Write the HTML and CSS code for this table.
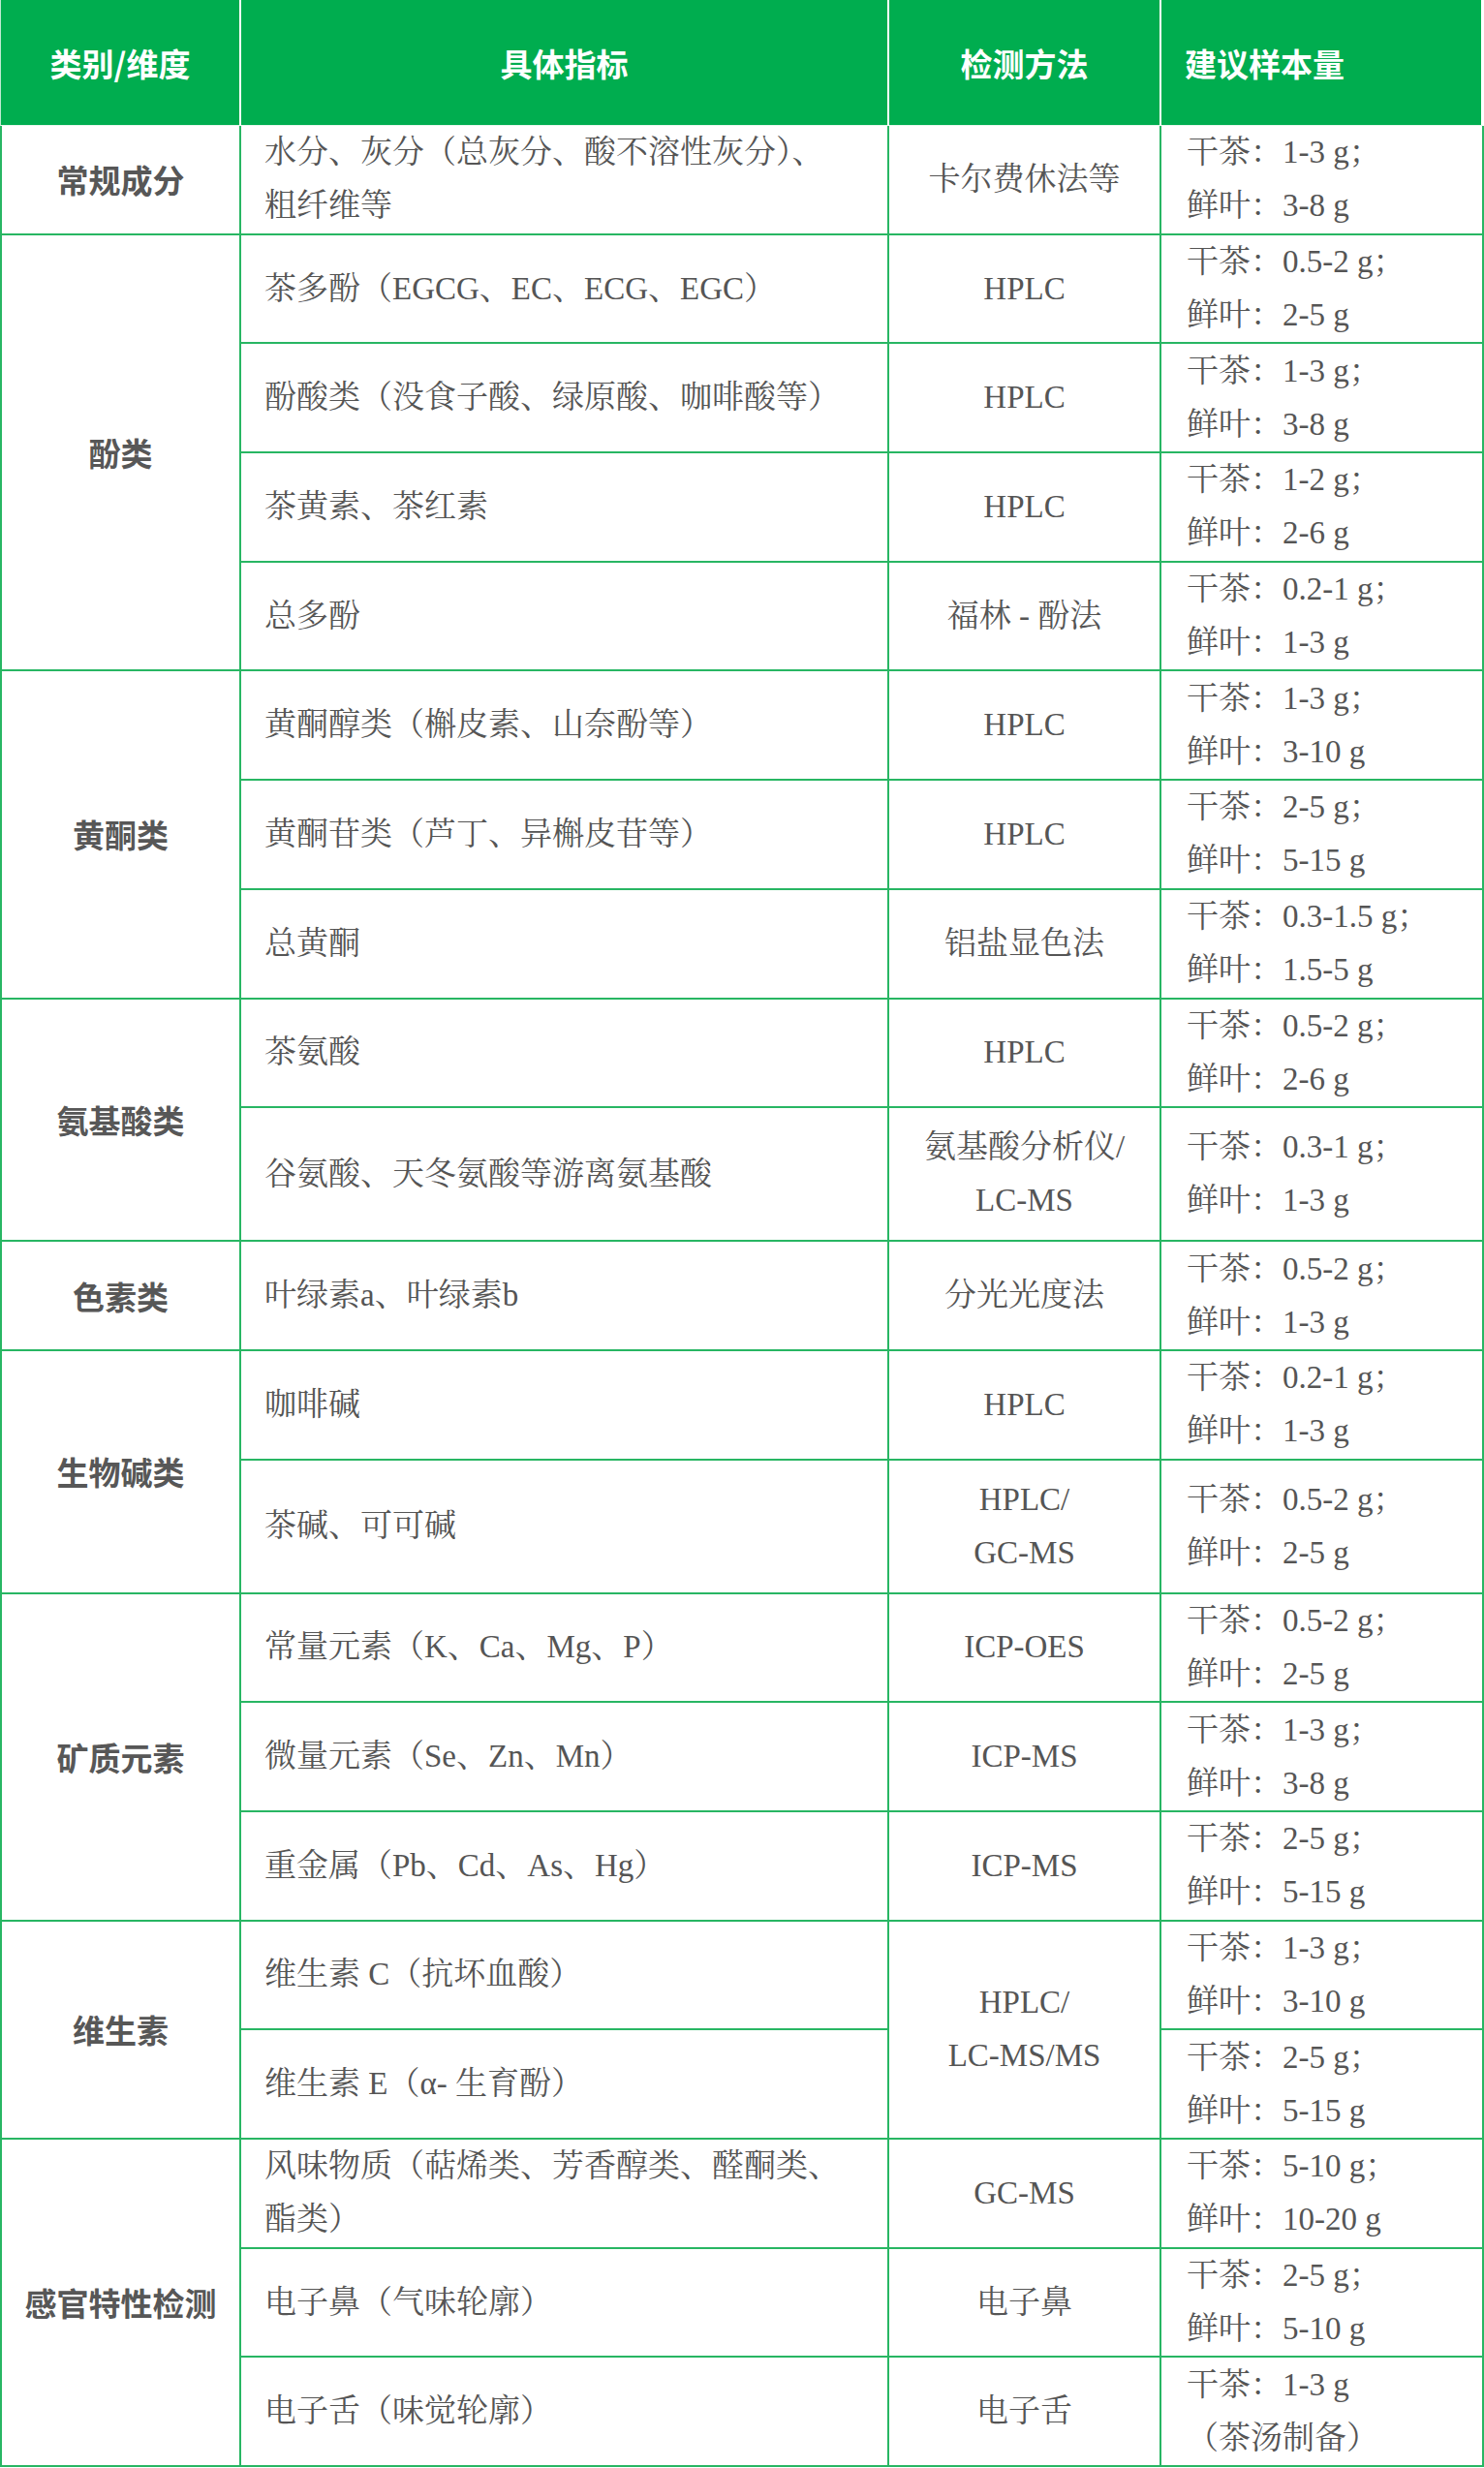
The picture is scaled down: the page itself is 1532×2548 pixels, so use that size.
FILE: index.html
```html
<!DOCTYPE html>
<html lang="zh-CN">
<head>
<meta charset="utf-8">
<title>茶叶检测指标</title>
<link rel="stylesheet" href="styles.css">
</head>
<body>
<table class="spec">
  <colgroup>
    <col class="c-cat">
    <col class="c-item">
    <col class="c-method">
    <col class="c-amount">
  </colgroup>
  <thead>
    <tr class="head-row">
      <th class="h-center">类别/维度</th>
      <th class="h-center">具体指标</th>
      <th class="h-center">检测方法</th>
      <th class="h-left">建议样本量</th>
    </tr>
  </thead>
  <tbody>
    <tr class="row">
      <td class="cat">常规成分</td>
      <td class="item">水分、灰分（总灰分、酸不溶性灰分）、<br>粗纤维等</td>
      <td class="method">卡尔费休法等</td>
      <td class="amount">干茶：1-3 g；<br>鲜叶：3-8 g</td>
    </tr>

    <tr class="row">
      <td class="cat" rowspan="4">酚类</td>
      <td class="item">茶多酚（EGCG、EC、ECG、EGC）</td>
      <td class="method">HPLC</td>
      <td class="amount">干茶：0.5-2 g；<br>鲜叶：2-5 g</td>
    </tr>
    <tr class="row">
      <td class="item">酚酸类（没食子酸、绿原酸、咖啡酸等）</td>
      <td class="method">HPLC</td>
      <td class="amount">干茶：1-3 g；<br>鲜叶：3-8 g</td>
    </tr>
    <tr class="row">
      <td class="item">茶黄素、茶红素</td>
      <td class="method">HPLC</td>
      <td class="amount">干茶：1-2 g；<br>鲜叶：2-6 g</td>
    </tr>
    <tr class="row">
      <td class="item">总多酚</td>
      <td class="method">福林 - 酚法</td>
      <td class="amount">干茶：0.2-1 g；<br>鲜叶：1-3 g</td>
    </tr>

    <tr class="row">
      <td class="cat" rowspan="3">黄酮类</td>
      <td class="item">黄酮醇类（槲皮素、山奈酚等）</td>
      <td class="method">HPLC</td>
      <td class="amount">干茶：1-3 g；<br>鲜叶：3-10 g</td>
    </tr>
    <tr class="row">
      <td class="item">黄酮苷类（芦丁、异槲皮苷等）</td>
      <td class="method">HPLC</td>
      <td class="amount">干茶：2-5 g；<br>鲜叶：5-15 g</td>
    </tr>
    <tr class="row">
      <td class="item">总黄酮</td>
      <td class="method">铝盐显色法</td>
      <td class="amount">干茶：0.3-1.5 g；<br>鲜叶：1.5-5 g</td>
    </tr>

    <tr class="row">
      <td class="cat" rowspan="2">氨基酸类</td>
      <td class="item">茶氨酸</td>
      <td class="method">HPLC</td>
      <td class="amount">干茶：0.5-2 g；<br>鲜叶：2-6 g</td>
    </tr>
    <tr class="row-tall">
      <td class="item">谷氨酸、天冬氨酸等游离氨基酸</td>
      <td class="method">氨基酸分析仪/<br>LC-MS</td>
      <td class="amount">干茶：0.3-1 g；<br>鲜叶：1-3 g</td>
    </tr>

    <tr class="row">
      <td class="cat">色素类</td>
      <td class="item">叶绿素a、叶绿素b</td>
      <td class="method">分光光度法</td>
      <td class="amount">干茶：0.5-2 g；<br>鲜叶：1-3 g</td>
    </tr>

    <tr class="row">
      <td class="cat" rowspan="2">生物碱类</td>
      <td class="item">咖啡碱</td>
      <td class="method">HPLC</td>
      <td class="amount">干茶：0.2-1 g；<br>鲜叶：1-3 g</td>
    </tr>
    <tr class="row-tall">
      <td class="item">茶碱、可可碱</td>
      <td class="method">HPLC/<br>GC-MS</td>
      <td class="amount">干茶：0.5-2 g；<br>鲜叶：2-5 g</td>
    </tr>

    <tr class="row">
      <td class="cat" rowspan="3">矿质元素</td>
      <td class="item">常量元素（K、Ca、Mg、P）</td>
      <td class="method">ICP-OES</td>
      <td class="amount">干茶：0.5-2 g；<br>鲜叶：2-5 g</td>
    </tr>
    <tr class="row">
      <td class="item">微量元素（Se、Zn、Mn）</td>
      <td class="method">ICP-MS</td>
      <td class="amount">干茶：1-3 g；<br>鲜叶：3-8 g</td>
    </tr>
    <tr class="row">
      <td class="item">重金属（Pb、Cd、As、Hg）</td>
      <td class="method">ICP-MS</td>
      <td class="amount">干茶：2-5 g；<br>鲜叶：5-15 g</td>
    </tr>

    <tr class="row">
      <td class="cat" rowspan="2">维生素</td>
      <td class="item">维生素 C（抗坏血酸）</td>
      <td class="method" rowspan="2">HPLC/<br>LC-MS/MS</td>
      <td class="amount">干茶：1-3 g；<br>鲜叶：3-10 g</td>
    </tr>
    <tr class="row">
      <td class="item">维生素 E（α- 生育酚）</td>
      <td class="amount">干茶：2-5 g；<br>鲜叶：5-15 g</td>
    </tr>

    <tr class="row">
      <td class="cat" rowspan="3">感官特性检测</td>
      <td class="item">风味物质（萜烯类、芳香醇类、醛酮类、<br>酯类）</td>
      <td class="method">GC-MS</td>
      <td class="amount">干茶：5-10 g；<br>鲜叶：10-20 g</td>
    </tr>
    <tr class="row">
      <td class="item">电子鼻（气味轮廓）</td>
      <td class="method">电子鼻</td>
      <td class="amount">干茶：2-5 g；<br>鲜叶：5-10 g</td>
    </tr>
    <tr class="row">
      <td class="item">电子舌（味觉轮廓）</td>
      <td class="method">电子舌</td>
      <td class="amount">干茶：1-3 g<br>（茶汤制备）</td>
    </tr>
  </tbody>
</table>
</body>
</html>
```

FILE: styles.css
```css
html, body {
  margin: 0;
  padding: 0;
  background: #ffffff;
}

.spec {
  width: 1532px;
  table-layout: fixed;
  border-collapse: separate;
  border-spacing: 0;
  font-family: "Liberation Serif", "Noto Serif CJK SC", "Noto Sans CJK SC", serif;
  font-size: 33px;
  line-height: 55px;
  color: #555555;
}

.c-cat { width: 249px; }
.c-item { width: 669px; }
.c-method { width: 281px; }
.c-amount { width: 333px; }

.head-row {
  height: 130px;
}

.spec th {
  background: #00ad4f;
  color: #ffffff;
  font-family: "Noto Sans CJK SC", sans-serif;
  font-weight: 700;
  font-size: 33px;
  line-height: 40px;
  padding: 0;
  border-right: 2px solid #ffffff;
  border-bottom: 1px solid #e6f7ed;
  vertical-align: middle;
}

.spec th:first-child {
  border-left: 1px solid #bfe9d1;
}

.spec th:last-child {
  border-right: 3px solid #ffffff;
}

.h-center {
  text-align: center;
}

.h-left {
  text-align: left;
  padding-left: 24px !important;
}

.row {
  height: 112.7px;
}

.row-tall {
  height: 138px;
}

.spec td {
  border-right: 2px solid #28b663;
  border-bottom: 2px solid #28b663;
  padding: 0;
  vertical-align: middle;
}

.spec td.cat {
  border-left: 2px solid #28b663;
  text-align: center;
  font-family: "Noto Sans CJK SC", sans-serif;
  font-weight: 700;
  color: #575757;
  line-height: 40px;
}

.item {
  text-align: left;
  padding-left: 24px !important;
}

.method {
  text-align: center;
}

.amount {
  text-align: left;
  padding-left: 26px !important;
}
```
